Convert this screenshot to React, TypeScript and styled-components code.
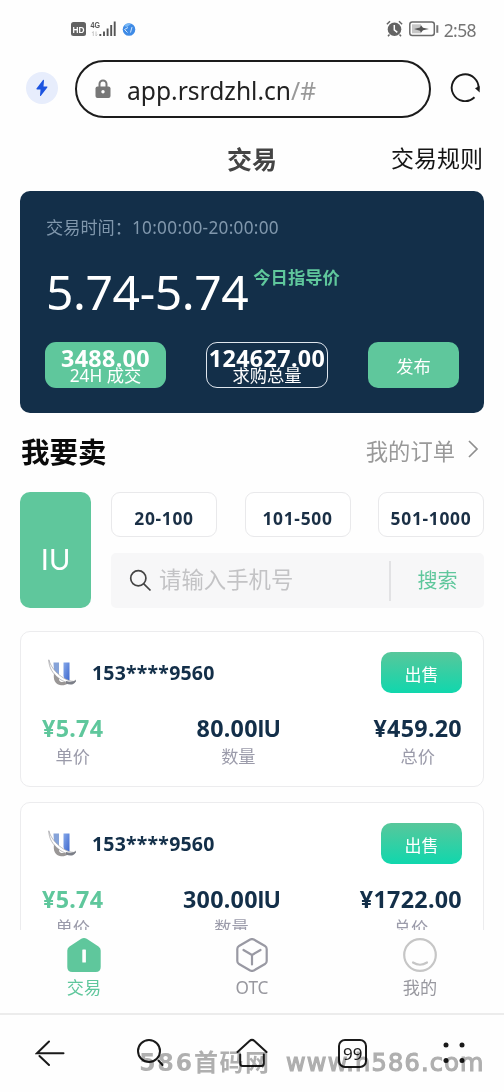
import React from "react";
import styled, { createGlobalStyle } from "styled-components";

const green = "#5fc79c";
const navy = "#132f49";

const GlobalStyle = createGlobalStyle`
  * { box-sizing: border-box; }
  body {
    margin: 0;
    background: #fefefe;
    font-family: "Noto Sans", "Noto Sans CJK SC", sans-serif;
    overflow: hidden;
  }
  button { font-family: inherit; padding: 0; border: 0; background: none; }
  svg { display: block; flex: none; }
`;

const Screen = styled.div`
  position: relative;
  width: 504px;
  height: 1092px;
  display: flex;
  flex-direction: column;
  overflow: hidden;
  background: #fefefe;
`;

/* Phone status bar */
const StatusBar = styled.header`
  height: 60px;
  flex: none;
  display: flex;
  justify-content: space-between;
  align-items: center;
  padding: 0 28px 2px 71px;
`;
const StatusGroup = styled.div`
  display: flex;
  align-items: center;
`;
const Clock = styled.span`
  margin-left: 5px;
  padding-top: 2px;
  font-size: 17.5px;
  line-height: 20px;
  letter-spacing: -0.6px;
  color: #747474;
`;

/* Browser address row */
const AddressRow = styled.div`
  height: 58px;
  flex: none;
  display: flex;
  align-items: center;
  padding: 0 22px 0 26px;
`;
const Bolt = styled.span`
  width: 32px;
  height: 32px;
  margin-right: 17px;
  margin-bottom: 2px;
  border-radius: 50%;
  background: #e7edfc;
  display: flex;
  align-items: center;
  justify-content: center;
`;
const Address = styled.div`
  width: 356px;
  height: 58px;
  margin-right: 18px;
  border: 2px solid #1c1c1c;
  border-radius: 29px;
  display: flex;
  align-items: center;
  padding-left: 18px;
`;
const Url = styled.span`
  margin-left: 16px;
  font-size: 24.6px;
  line-height: 32px;
  padding-top: 3px;
  color: #222;
  i { font-style: normal; color: #999; }
`;

/* Page title */
const TitleBar = styled.div`
  height: 73px;
  flex: none;
  display: grid;
  grid-template-columns: 1fr auto 1fr;
  align-items: center;
  padding: 7px 21px 0;
  font-family: "Noto Sans CJK SC", sans-serif;
`;
const Title = styled.h1`
  grid-column: 2;
  margin: 0;
  font-size: 25px;
  line-height: 36px;
  font-weight: 700;
  color: #444;
`;
const Rules = styled.a`
  justify-self: end;
  font-size: 23px;
  line-height: 36px;
  color: #151515;
  margin-top: -3px;
`;

const Content = styled.main`
  height: 739px;
  flex: none;
  overflow: hidden;
  padding: 0 20px;
`;

/* Price panel */
const Panel = styled.section`
  width: 464px;
  height: 222px;
  border-radius: 10px;
  background: ${navy};
  padding: 24px 25px 25px;
  display: flex;
  flex-direction: column;
`;
const TradeTime = styled.div`
  padding-left: 1px;
  font-size: 17.2px;
  line-height: 26px;
  color: #8097ac;
  white-space: pre;
  span { letter-spacing: 0.3px; }
`;
const PriceRow = styled.div`
  display: flex;
  height: 58px;
  margin-top: 22px;
`;
const Price = styled.span`
  font-size: 48px;
  line-height: 58px;
  letter-spacing: -0.4px;
  padding-left: 1px;
  color: #fff;
`;
const GuideLabel = styled.span`
  margin: 3px 0 0 5px;
  font-size: 17.3px;
  line-height: 24px;
  font-weight: 700;
  color: ${green};
`;
const Stats = styled.div`
  display: flex;
  margin-top: auto;
  height: 46px;
`;
const Stat = styled.div<{ $outlined?: boolean }>`
  width: ${(p) => (p.$outlined ? 122 : 121)}px;
  height: 46px;
  margin-right: 40px;
  border-radius: 11px;
  border: ${(p) => (p.$outlined ? "1.5px solid #dfe6ee" : "0")};
  background: ${(p) => (p.$outlined ? "transparent" : green)};
  padding-top: ${(p) => (p.$outlined ? 6 : 7)}px;
  display: flex;
  flex-direction: column;
  align-items: center;
  color: #fff;
`;
const StatValue = styled.strong`
  font-size: 23.3px;
  line-height: 18px;
  font-weight: 700;
  letter-spacing: 0.35px;
`;
const StatLabel = styled.span`
  font-size: 17.3px;
  line-height: 18px;
  white-space: nowrap;
`;
const Publish = styled.button`
  width: 91px;
  height: 46px;
  border-radius: 10px;
  background: ${green};
  color: #fff;
  font-size: 17.3px;
  line-height: 46px;
  padding-top: 2px;
`;

/* Sell section */
const SectionHead = styled.div`
  height: 79px;
  display: flex;
  align-items: center;
  justify-content: space-between;
  padding: 0 5px 2px 1px;
`;
const SectionTitle = styled.h2`
  margin: 0;
  font-size: 28.5px;
  line-height: 40px;
  font-weight: 700;
  color: #0a0a0a;
`;
const Orders = styled.a`
  display: flex;
  align-items: center;
  gap: 13px;
  font-size: 22.3px;
  line-height: 32px;
  color: #999;
  svg { margin-bottom: 5px; }
`;
const Filter = styled.div`
  display: grid;
  grid-template-columns: 71px 373px;
  column-gap: 20px;
  height: 116px;
`;
const Coin = styled.button`
  border-radius: 10px;
  background: ${green};
  color: #fff;
  font-family: Lato, sans-serif;
  font-size: 29px;
  font-weight: 400;
  padding-top: 16px;
`;
const FilterRight = styled.div`
  display: flex;
  flex-direction: column;
  justify-content: space-between;
`;
const Ranges = styled.div`
  display: flex;
  justify-content: space-between;
`;
const Range = styled.button`
  width: 106px;
  height: 45px;
  border: 1.5px solid #e9e9eb;
  border-radius: 9px;
  background: #fff;
  color: #1a2f45;
  font-size: 17.4px;
  font-weight: 700;
  letter-spacing: 0.7px;
  padding-top: 7px;
`;
const Search = styled.div`
  height: 55px;
  background: #f7f7f8;
  border-radius: 5px;
  display: flex;
  align-items: center;
  padding-left: 18px;
`;
const Placeholder = styled.span`
  width: 237px;
  flex: none;
  padding: 0 0 1px 7px;
  font-size: 22.4px;
  line-height: 32px;
  color: #c3c3c5;
`;
const SearchButton = styled.button`
  flex: 1;
  height: 40px;
  border-left: 2px solid #e2e2e4;
  color: ${green};
  font-size: 20px;
  line-height: 38px;
`;

/* Offer card */
const Offer = styled.article`
  height: 156px;
  margin-top: 23px;
  border: 1.5px solid #ececee;
  border-radius: 10px;
  background: #fff;
  padding: 20px 21px 0;
  & + & { margin-top: 15px; }
`;
const OfferHead = styled.div`
  display: flex;
  align-items: center;
  height: 41px;
  padding-left: 6px;
`;
const Phone = styled.strong`
  margin-left: 15px;
  flex: 1;
  font-size: 19.5px;
  line-height: 28px;
  letter-spacing: 0.2px;
  color: ${navy};
`;
const Sell = styled.button`
  width: 81px;
  height: 41px;
  border-radius: 10px;
  background: linear-gradient(#58c79b, #10d7ad);
  color: #fff;
  font-size: 17px;
  line-height: 41px;
  padding-top: 2px;
`;
const Figures = styled.div`
  display: flex;
  justify-content: space-between;
  margin-top: 19px;
`;
const Figure = styled.div<{ $accent?: boolean }>`
  display: flex;
  flex-direction: column;
  align-items: center;
  strong {
    font-size: 23.3px;
    line-height: 33px;
    height: 33px;
    letter-spacing: 0.3px;
    color: ${(p) => (p.$accent ? green : navy)};
  }
  > span {
    font-size: 17.2px;
    line-height: 24px;
    color: #9b9baa;
  }
`;
const Unit = styled.span`
  font-family: Inter, sans-serif;
  font-size: 22.5px;
  letter-spacing: -0.2px;
`;

/* App tabs */
const Tabs = styled.nav`
  height: 85px;
  flex: none;
  display: grid;
  grid-template-columns: repeat(3, 1fr);
  border-bottom: 2px solid #ececec;
`;
const Tab = styled.a<{ $active?: boolean }>`
  display: flex;
  flex-direction: column;
  align-items: center;
  padding-top: 8px;
  font-size: 17.2px;
  line-height: 26px;
  color: ${(p) => (p.$active ? green : "#98989f")};
  span { margin-top: 3px; }
`;

/* Browser toolbar */
const Toolbar = styled.footer`
  flex: 1;
  display: grid;
  grid-template-columns: repeat(5, 1fr);
  justify-items: center;
  align-items: center;
  padding-bottom: 1px;
`;
const Windows = styled.span`
  width: 29px;
  height: 29px;
  border: 2px solid #1a1a1a;
  border-radius: 7px;
  font-size: 17px;
  line-height: 25px;
  text-align: center;
  color: #1a1a1a;
`;
const Watermark = styled.div`
  position: absolute;
  left: 139px;
  top: 1048px;
  display: flex;
  gap: 12px;
  font: 700 24px/30px "DejaVu Sans", "Noto Sans CJK SC", sans-serif;
  color: #b0b0b0;
  mix-blend-mode: multiply;
  white-space: nowrap;
`;
const MarkName = styled.span`
  width: 135px;
  letter-spacing: 1.6px;
`;
const MarkSite = styled.span`
  font-weight: 400;
  -webkit-text-stroke: 1.2px #b0b0b0;
  letter-spacing: 1.2px;
`;

const StatusLeftIcons = () => (
  <svg width="66" height="20" viewBox="0 0 66 20">
    <rect x="0" y="3" width="15" height="14" rx="2.5" fill="#626262" />
    <text x="1.5" y="13.6" fontSize="9.5" fontWeight="700" fontFamily="Liberation Sans" fill="#fff" textLength="12" lengthAdjust="spacingAndGlyphs">HD</text>
    <text x="19.5" y="9" fontSize="8.5" fontWeight="700" fontFamily="Liberation Sans" fill="#555" textLength="9.5" lengthAdjust="spacingAndGlyphs">4G</text>
    <path d="M22.300 17v-4.500l-1.300 1.500M25 12.500V17l1.300-1.500" stroke="#c4c4c4" fill="none" strokeWidth="0.900" />
    <path d="M29.300 15v2M33 12.500V17M36.600 9.500V17M40.200 6V17M43.700 2.500V17" stroke="#555" strokeWidth="1.900" />
    <circle cx="58" cy="10.500" r="6.300" fill="#3f8be6" />
    <path d="M53.500 10.500l3.500-2M53.500 10.500l3 3M61 8l-1.500 5.500" fill="none" stroke="#cfe4fc" strokeWidth="1" />
    <path d="M53 7l3-2.500 4 .5-4 3z" fill="#79b9f6" />
  </svg>
);

const AlarmIcon = () => (
  <svg width="17" height="18" viewBox="0 0 17 18">
    <circle cx="8.500" cy="9.300" r="6.800" fill="#646464" />
    <path d="M.9 4.200L4 1.200M16.100 4.200L13 1.200M3.500 14.500L2 16.300M13.500 14.500l1.500 1.800" stroke="#646464" strokeWidth="1.500" />
    <path d="M8.300 5v4.800l3 2.500" fill="none" stroke="#fff" strokeWidth="1.500" />
  </svg>
);

const BatteryIcon = () => (
  <svg width="31" height="16" viewBox="-1 0 31 16">
    <rect x=".8" y="1" width="24.500" height="13.500" rx="2.500" fill="none" stroke="#6a6a6a" strokeWidth="1.500" />
    <rect x="3" y="3.300" width="9" height="9" fill="#c6c6c6" />
    <path d="M5 8l6-1.500L12 4.300l2 2.500 6 1.200-6 1.200-2 2.500-1-2z" fill="#555" />
    <path d="M28.300 4.200v7.600" stroke="#777" strokeWidth="2" />
  </svg>
);

const StatusRight = styled(StatusGroup)`
  svg + svg { margin-left: 5px; }
`;

const CoinLogo = () => (
  <svg width="29" height="28" viewBox="0 0 29 28">
    <defs>
      <linearGradient id="logoBlue" x1="0" y1="0" x2="1" y2="1">
        <stop offset="0" stopColor="#86a9ea" />
        <stop offset="1" stopColor="#3f68cd" />
      </linearGradient>
    </defs>
    <path d="M5.500 3.500h5.500v13l-5-4z" fill="#86a3d8" />
    <path d="M15.500 3.500h6v18l-4-1.500q-2-1-2-3z" fill="url(#logoBlue)" />
    <path d="M6.200 13.500c-1.500 7 1 12 6.800 12.700 3 .2 5-.5 7-2l-3.500-1.500c-2 .8-5 .5-5.500-2 0-1 .5-2 1-2.700z" fill="#9a9796" />
    <path d="M.8.8c0 8 4.200 14 10 18.500 5 4 11 5.500 17 3-6 .5-11-2-16-6C6 11.700 2.500 6.500.8.800z" fill="#fff" stroke="#8f8f94" strokeWidth=".6" />
    <path d="M18 24.500c4 2 8.500 1.200 9.700-2l.3-2c-2 2.300-6 2.700-10 1.500z" fill="#7c7f88" />
  </svg>
);

const offers = [
  { phone: "153****9560", price: "¥5.74", amount: "80.00", total: "¥459.20" },
  { phone: "153****9560", price: "¥5.74", amount: "300.00", total: "¥1722.00" },
];

export default function App() {
  return (
    <Screen>
      <GlobalStyle />
      <StatusBar>
        <StatusGroup><StatusLeftIcons /></StatusGroup>
        <StatusRight>
          <AlarmIcon />
          <BatteryIcon />
          <Clock>2:58</Clock>
        </StatusRight>
      </StatusBar>

      <AddressRow>
        <Bolt>
          <svg width="14" height="18" viewBox="0 0 14 18">
            <path d="M8 1L1.500 9.500c-.3.500 0 .9.500.9h3.500L5 16.500c0 .6.500.7.900.2l6.400-8.300c.3-.5.100-.9-.5-.9H8.500L9 1.500C9 .8 8.400.5 8 1z" fill="#1b53e0" />
          </svg>
        </Bolt>
        <Address>
          <svg width="16" height="20" viewBox="0 0 16 20">
            <path d="M4.500 9V5a3.500 3.500 0 017 0v4" fill="none" stroke="#777" strokeWidth="2" />
            <rect x=".5" y="7.500" width="15" height="11.500" rx="2" fill="#777" />
            <circle cx="8" cy="12.800" r="1.700" fill="#fff" />
          </svg>
          <Url>app.rsrdzhl.cn<i>/#</i></Url>
        </Address>
        <svg width="32" height="32" viewBox="0 0 32 32">
          <path d="M25.500 24.300A13.400 13.400 0 1129.400 16.500" fill="none" stroke="#1a1a1a" strokeWidth="1.900" />
          <path d="M26 15.200l4.600-2.200.1 6.500z" fill="#1a1a1a" />
        </svg>
      </AddressRow>

      <TitleBar>
        <Title>交易</Title>
        <Rules>交易规则</Rules>
      </TitleBar>

      <Content>
        <Panel>
          <TradeTime>交易时间：<span>10:00:00-20:00:00</span></TradeTime>
          <PriceRow>
            <Price>5.74-5.74</Price>
            <GuideLabel>今日指导价</GuideLabel>
          </PriceRow>
          <Stats>
            <Stat>
              <StatValue>3488.00</StatValue>
              <StatLabel>24H 成交</StatLabel>
            </Stat>
            <Stat $outlined>
              <StatValue>124627.00</StatValue>
              <StatLabel>求购总量</StatLabel>
            </Stat>
            <Publish>发布</Publish>
          </Stats>
        </Panel>

        <SectionHead>
          <SectionTitle>我要卖</SectionTitle>
          <Orders>
            我的订单
            <svg width="11" height="18" viewBox="0 0 11 18">
              <path d="M1 1l8 8-8 8" fill="none" stroke="#8f8f8f" strokeWidth="1.700" />
            </svg>
          </Orders>
        </SectionHead>

        <Filter>
          <Coin>IU</Coin>
          <FilterRight>
            <Ranges>
              <Range>20-100</Range>
              <Range>101-500</Range>
              <Range>501-1000</Range>
            </Ranges>
            <Search>
              <svg width="23" height="23" viewBox="0 0 23 23">
                <circle cx="9.300" cy="9.300" r="7.600" fill="none" stroke="#444" strokeWidth="1.700" />
                <path d="M14.800 14.800l6.700 6.700" stroke="#444" strokeWidth="1.700" />
              </svg>
              <Placeholder>请输入手机号</Placeholder>
              <SearchButton>搜索</SearchButton>
            </Search>
          </FilterRight>
        </Filter>

        {offers.map((o) => (
          <Offer key={o.total}>
            <OfferHead>
              <CoinLogo />
              <Phone>{o.phone}</Phone>
              <Sell>出售</Sell>
            </OfferHead>
            <Figures>
              <Figure $accent><strong>{o.price}</strong><span>单价</span></Figure>
              <Figure><strong>{o.amount}<Unit>IU</Unit></strong><span>数量</span></Figure>
              <Figure><strong>{o.total}</strong><span>总价</span></Figure>
            </Figures>
          </Offer>
        ))}
      </Content>

      <Tabs>
        <Tab $active>
          <svg width="34" height="34" viewBox="0 0 34 34">
            <path d="M14.300.8q2.700-1.600 5.400 0L31.500 8.500Q33.700 10 33.700 12.500V29q0 5-5 5H5.300q-5 0-5-5V12.500Q.3 10 2.500 8.500z" fill={green} />
            <rect x="15.300" y="11.500" width="3.600" height="13" rx=".6" fill="#fff" />
          </svg>
          <span>交易</span>
        </Tab>
        <Tab>
          <svg width="34" height="34" viewBox="0 0 34 34" fill="none" stroke="#9999a3" strokeWidth="2.200" strokeLinejoin="round" strokeLinecap="round">
            <path d="M15.200 1.500q1.800-.9 3.600 0L30 8q1.700 1 1.700 3v12q0 2-1.700 3L18.800 32.500q-1.800.9-3.600 0L4 26q-1.700-1-1.700-3V11q0-2 1.700-3z" />
            <path d="M8.500 12l8.500 5 8.500-5M17 17v9.500" />
          </svg>
          <span>OTC</span>
        </Tab>
        <Tab>
          <svg width="34" height="34" viewBox="0 0 34 34" fill="none" stroke="#c6c6c6" strokeWidth="2.200" strokeLinecap="round">
            <circle cx="17" cy="17" r="15.800" />
            <path d="M10 24.500q7 4.500 14 0" />
          </svg>
          <span>我的</span>
        </Tab>
      </Tabs>

      <Toolbar>
        <svg width="30" height="28" viewBox="0 0 30 28" fill="none" stroke="#1a1a1a" strokeWidth="2" strokeLinecap="round">
          <path d="M14 2.500L2 14.200H28.500M4.500 17l9.500 9" />
        </svg>
        <svg width="30" height="30" viewBox="0 0 30 30" fill="none" stroke="#1a1a1a" strokeWidth="2" strokeLinecap="round">
          <circle cx="13" cy="13" r="11" />
          <path d="M22.500 22.500l4 4.500" />
        </svg>
        <svg width="32" height="30" viewBox="0 0 32 30" fill="none" stroke="#1a1a1a" strokeWidth="2" strokeLinejoin="round" strokeLinecap="round">
          <path d="M1.500 14L13.500 3q2.500-2.300 5 0l12 11" />
          <path d="M4.200 16.500V25.500q0 2.500 2.500 2.500h18.600q2.500 0 2.500-2.500V16.500" />
        </svg>
        <Windows>99</Windows>
        <svg width="24" height="24" viewBox="0 0 24 24" fill="#1a1a1a">
          <circle cx="4" cy="4" r="2.500" />
          <circle cx="20" cy="4" r="2.500" />
          <circle cx="4" cy="19.500" r="2.500" />
          <circle cx="20" cy="19.500" r="2.500" />
        </svg>
      </Toolbar>
      <Watermark>
        <MarkName>586首码网</MarkName>
        <MarkSite>www.h586.com</MarkSite>
      </Watermark>
    </Screen>
  );
}
